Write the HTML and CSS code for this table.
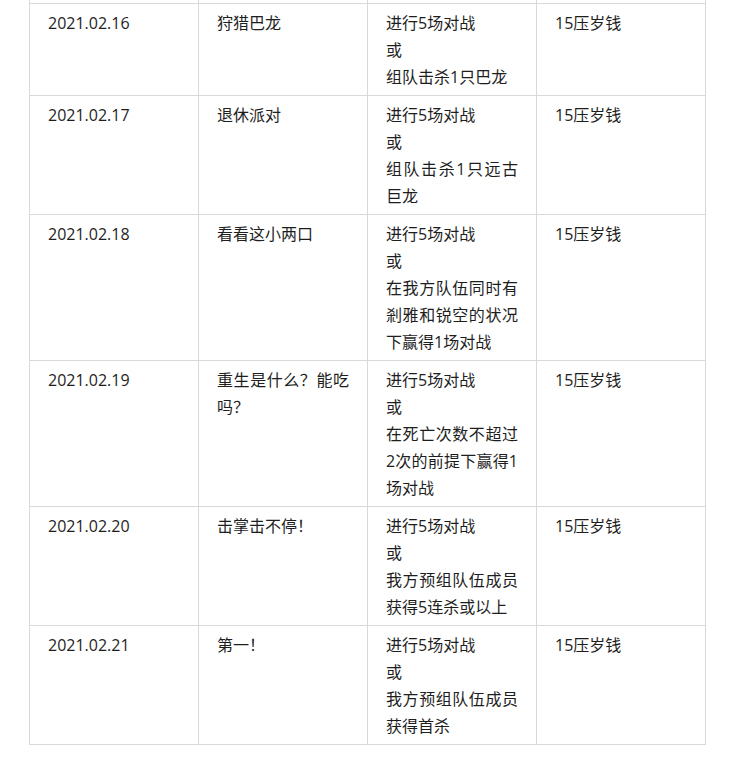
FILE: index.html
```html
<!DOCTYPE html>
<html lang="zh-CN">
<head>
<meta charset="utf-8">
<link rel="stylesheet" href="styles.css">
</head>
<body>
<table class="events">
  <colgroup><col><col><col><col></colgroup>
  <tbody>
    <tr class="cut"><td></td><td></td><td></td><td></td></tr>
    <tr>
      <td>2021.02.16</td>
      <td>狩猎巴龙</td>
      <td>进行5场对战<br>或<br>组队击杀1只巴龙</td>
      <td>15压岁钱</td>
    </tr>
    <tr>
      <td>2021.02.17</td>
      <td>退休派对</td>
      <td>进行5场对战<br>或<br>组队击杀1只远古巨龙</td>
      <td>15压岁钱</td>
    </tr>
    <tr>
      <td>2021.02.18</td>
      <td>看看这小两口</td>
      <td>进行5场对战<br>或<br>在我方队伍同时有剎雅和锐空的状况下赢得1场对战</td>
      <td>15压岁钱</td>
    </tr>
    <tr>
      <td>2021.02.19</td>
      <td>重生是什么？能吃吗？</td>
      <td>进行5场对战<br>或<br>在死亡次数不超过2次的前提下赢得1场对战</td>
      <td>15压岁钱</td>
    </tr>
    <tr>
      <td>2021.02.20</td>
      <td>击掌击不停！</td>
      <td>进行5场对战<br>或<br>我方预组队伍成员获得5连杀或以上</td>
      <td>15压岁钱</td>
    </tr>
    <tr>
      <td>2021.02.21</td>
      <td>第一！</td>
      <td>进行5场对战<br>或<br>我方预组队伍成员获得首杀</td>
      <td>15压岁钱</td>
    </tr>
  </tbody>
</table>
</body>
</html>
```
FILE: styles.css
```css
html, body {
  margin: 0;
  padding: 0;
  background: #ffffff;
}

body {
  font-family: "Open Sans", "Noto Sans CJK SC", sans-serif;
  font-size: 16px;
  color: #1e1e1e;
}

.events {
  border-collapse: collapse;
  table-layout: fixed;
  width: 677px;
  margin-left: 29px;
}

.events col {
  width: 25%;
}

.events td {
  border: 1px solid #d9d9d9;
  padding: 6px 18px 4px;
  line-height: 27px;
  vertical-align: top;
  text-align: justify;
  word-break: break-all;
}

.events .cut td {
  border-top: none;
  padding: 0;
  height: 3px;
  line-height: 0;
}
```
